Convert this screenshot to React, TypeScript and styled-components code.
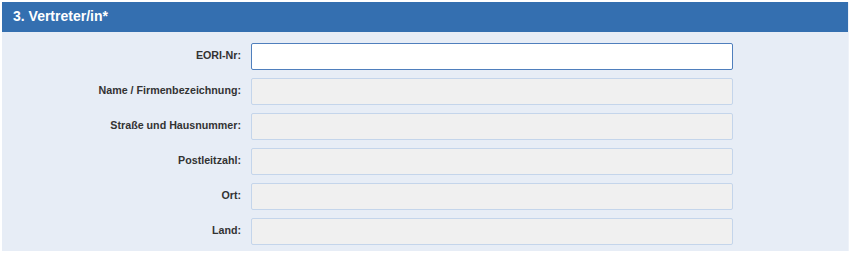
import React from 'react';
import styled, { createGlobalStyle } from 'styled-components';

const fields = [
  { id: 'eori', label: 'EORI-Nr:', editable: true },
  { id: 'name', label: 'Name / Firmenbezeichnung:', editable: false },
  { id: 'street', label: 'Straße und Hausnummer:', editable: false },
  { id: 'zip', label: 'Postleitzahl:', editable: false },
  { id: 'city', label: 'Ort:', editable: false },
  { id: 'country', label: 'Land:', editable: false },
];

export default function App() {
  return (
    <>
      <GlobalStyle />
      <Page>
        <Panel>
          <Header>3. Vertreter/in*</Header>
          <Form>
            {fields.map((f) => (
              <Row key={f.id}>
                <Label htmlFor={f.id}>{f.label}</Label>
                <Input id={f.id} type="text" $editable={f.editable} disabled={!f.editable} />
              </Row>
            ))}
          </Form>
        </Panel>
      </Page>
    </>
  );
}

const GlobalStyle = createGlobalStyle`
  html, body {
    margin: 0;
    padding: 0;
    background: #ffffff;
    font-family: "Liberation Sans", Arial, sans-serif;
  }
`;

const Page = styled.div`
  padding: 2px 3px 2px 2px;
  width: 852px;
  box-sizing: border-box;
`;

const Panel = styled.section`
  display: flex;
  flex-direction: column;
  background: #e7edf6;
  border-right: 1px solid #eef2f9;
`;

const Header = styled.h2`
  margin: 0;
  height: 30px;
  padding: 0 0 0 11px;
  background: #346fb0;
  color: #ffffff;
  font-size: 14px;
  font-weight: 700;
  line-height: 28px;
`;

const Form = styled.div`
  display: grid;
  row-gap: 8px;
  padding: 11px 0 6px;
`;

const Row = styled.div`
  display: grid;
  grid-template-columns: 239px 482px;
  column-gap: 10px;
  align-items: center;
`;

const Label = styled.label`
  padding-bottom: 4px;
  text-align: right;
  color: #333333;
  font-size: 10.7px;
  font-weight: 700;
`;

const Input = styled.input<{ $editable: boolean }>`
  box-sizing: border-box;
  height: 27px;
  width: 100%;
  margin: 0;
  padding: 0 6px;
  border-radius: 2px;
  border: 1px solid ${(p) => (p.$editable ? '#4f7fbd' : '#c4d5eb')};
  background: ${(p) => (p.$editable ? '#ffffff' : '#f0f0f0')};
  font-family: inherit;
  font-size: 12px;
  outline: none;
`;
